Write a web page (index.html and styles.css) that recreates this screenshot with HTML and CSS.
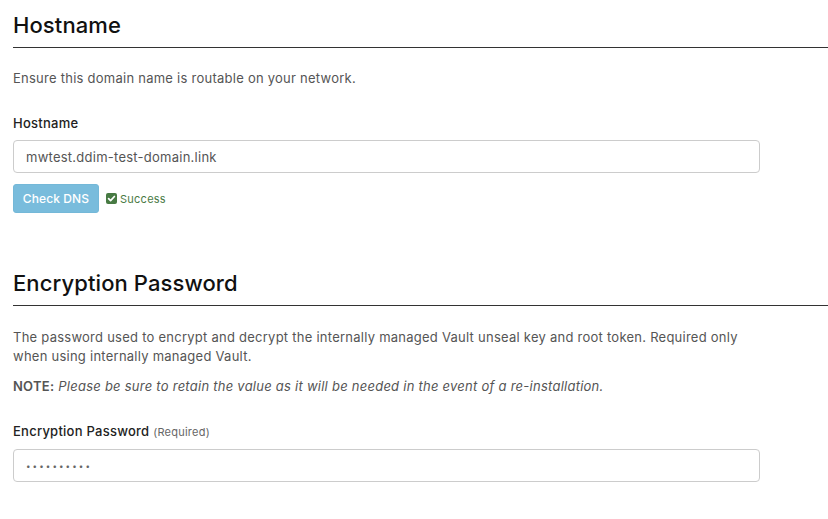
FILE: index.html
```html
<!DOCTYPE html>
<html>
<head>
<meta charset="utf-8">
<link rel="stylesheet" href="styles.css">
</head>
<body>
<div class="page">
  <section class="section">
    <h2 class="section-title">Hostname</h2>
    <p class="help">Ensure this domain name is routable on your network.</p>
    <div class="field">
      <label class="field-label" for="hostname">Hostname</label>
      <input class="text-input" id="hostname" type="text" value="mwtest.ddim-test-domain.link">
      <div class="actions">
        <button class="btn-info" type="button">Check DNS</button>
        <span class="status">
          <svg class="status-icon" width="11" height="11" viewBox="0 0 11 11"><rect x="0" y="0" width="11" height="11" rx="2" fill="#477a43"/><path d="M2.6 5.6 L4.6 7.6 L8.4 3.5" fill="none" stroke="#fff" stroke-width="1.7" stroke-linecap="round" stroke-linejoin="round"/></svg>
          Success
        </span>
      </div>
    </div>
  </section>
  <section class="section section-second">
    <h2 class="section-title">Encryption Password</h2>
    <p class="help help-wide">The password used to encrypt and decrypt the internally managed Vault unseal key and root token. Required only when using internally managed Vault.</p>
    <p class="note"><strong>NOTE:</strong> <em>Please be sure to retain the value as it will be needed in the event of a re-installation.</em></p>
    <div class="field field-pw">
      <label class="field-label" for="encpw">Encryption Password <span class="req">(Required)</span></label>
      <div class="text-input pw-input" id="encpw"><span class="dots">••••••••••</span></div>
    </div>
  </section>
</div>
</body>
</html>
```
FILE: styles.css
```css
html, body {
  margin: 0;
  padding: 0;
  background: #fff;
}
body {
  font-family: Inter, "Liberation Sans", sans-serif;
  color: #333;
  font-size: 13px;
  letter-spacing: 0.25px;
}
.page {
  padding: 11px 0 0 13px;
}
.section-title {
  margin: 0;
  font-size: 22px;
  font-weight: 500;
  color: #111;
  line-height: 28px;
  letter-spacing: 0.1px;
  padding-bottom: 8px;
  border-bottom: 1px solid #333;
}
.help {
  margin: 21px 0 0;
  line-height: 19px;
  color: #555;
  font-size: 13px;
}
.help-wide {
  max-width: 740px;
  margin-top: 22px;
}
.note {
  margin: 11px 0 0;
  line-height: 19px;
  color: #555;
}
.note strong {
  font-weight: 600;
}
.field {
  margin-top: 26px;
  display: flex;
  flex-direction: column;
  align-items: flex-start;
}
.field-label {
  font-weight: 500;
  color: #222;
  line-height: 19px;
  margin-bottom: 7px;
}
.req {
  font-weight: 400;
  color: #666;
  font-size: 11px;
}
.text-input {
  box-sizing: border-box;
  width: 747px;
  height: 33px;
  border: 1px solid #ccc;
  border-radius: 4px;
  padding: 0 12px;
  font-family: Inter, "Liberation Sans", sans-serif;
  font-size: 13px;
  letter-spacing: 0.25px;
  color: #555;
  background: #fff;
  outline: none;
}
.pw-input {
  display: flex;
  align-items: center;
}
.dots {
  font-size: 8px;
  letter-spacing: 2.1px;
  color: #666;
}
.actions {
  margin-top: 11px;
  display: flex;
  align-items: center;
  gap: 7px;
}
.btn-info {
  height: 29px;
  width: 86px;
  background: #79bcdc;
  border: 1px solid #74b8d8;
  border-radius: 3px;
  color: #fff;
  font-family: Inter, "Liberation Sans", sans-serif;
  font-size: 12px;
  font-weight: 500;
  letter-spacing: 0.1px;
  padding: 0;
}
.status {
  display: flex;
  align-items: center;
  gap: 3px;
  color: #4a7a44;
  font-size: 11px;
}
.section-second {
  margin-top: 56px;
}
.field-pw {
  margin-top: 26px;
}
```
